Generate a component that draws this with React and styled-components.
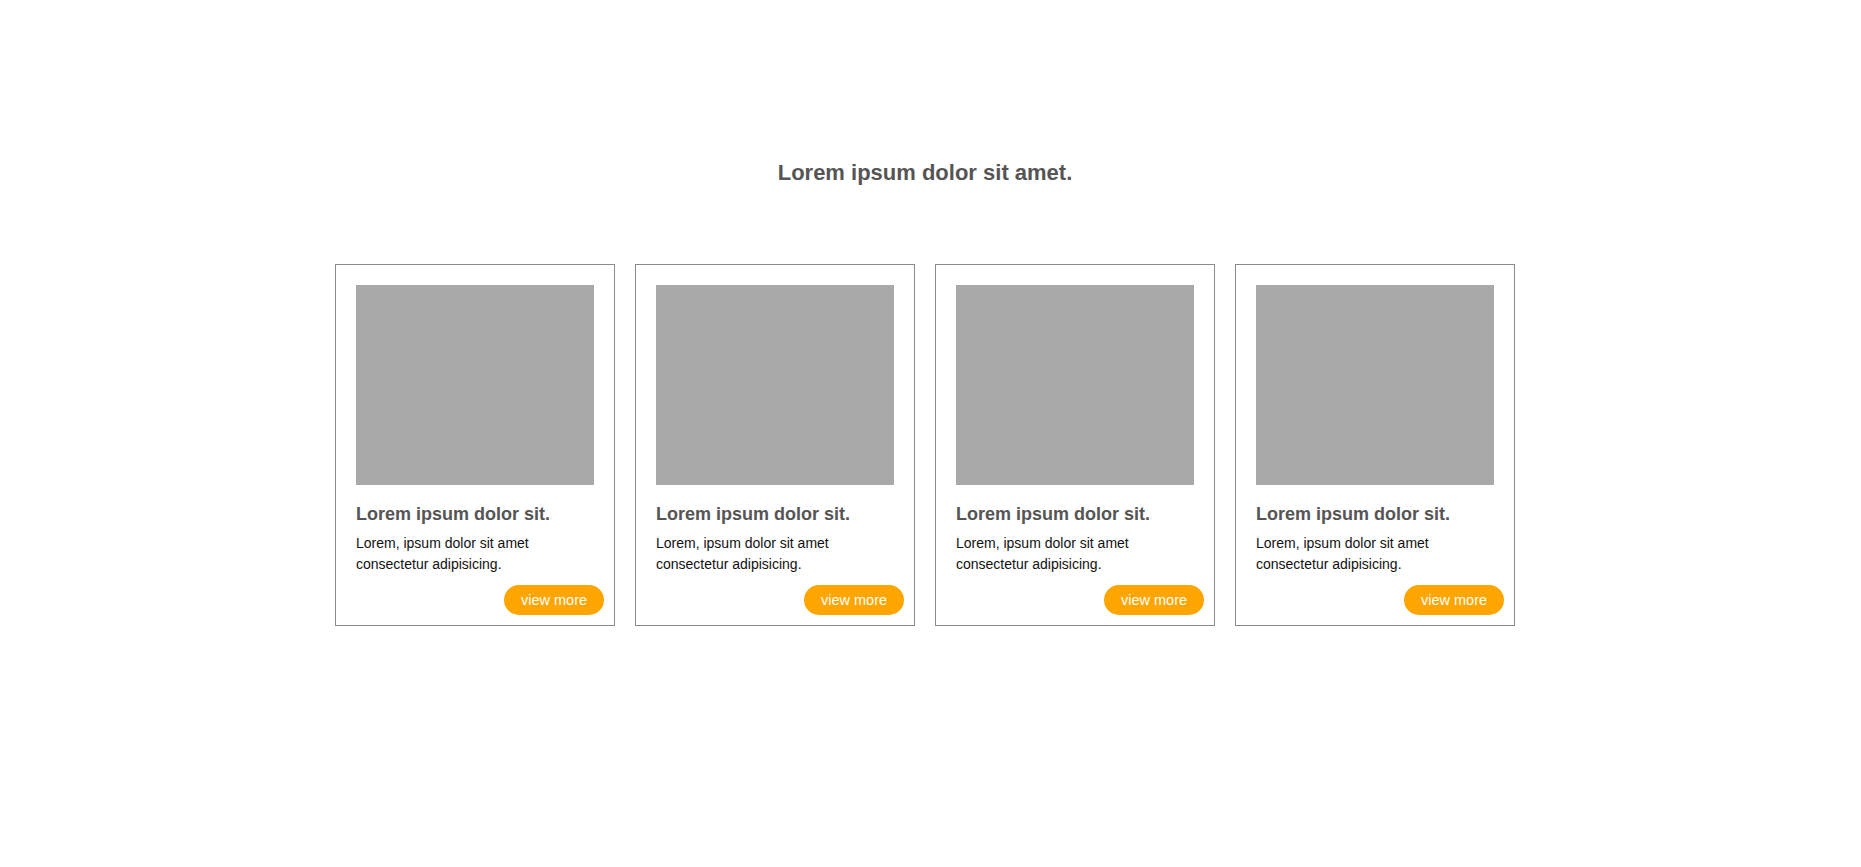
import React from "react";
import styled, { createGlobalStyle } from "styled-components";

const GlobalStyle = createGlobalStyle`
  html, body {
    margin: 0;
    padding: 0;
    background: #ffffff;
    font-family: "Liberation Sans", Arial, sans-serif;
  }
  * { box-sizing: border-box; }
`;

const Page = styled.main`
  display: flex;
  flex-direction: column;
  align-items: center;
  padding: 160px 11px 0 0;
  min-height: 867px;
`;

const Heading = styled.h1`
  margin: 0;
  font-size: 22px;
  font-weight: 700;
  line-height: 25px;
  color: #555555;
`;

const CardRow = styled.section`
  display: flex;
  gap: 20px;
  margin-top: 79px;
`;

const Card = styled.article`
  width: 280px;
  display: flex;
  flex-direction: column;
  border: 1px solid #8a8a8a;
  padding: 20px 20px 10px;
`;

const Thumb = styled.div`
  width: 238px;
  height: 200px;
  background: #a9a9a9;
`;

const CardTitle = styled.h3`
  margin: 18.7px 0 8px;
  font-size: 18px;
  font-weight: 700;
  line-height: 21.5px;
  color: #555555;
`;

const CardText = styled.p`
  margin: 0 0 10px;
  font-size: 14px;
  line-height: 21px;
  color: #111111;
  max-width: 190px;
`;

const MoreButton = styled.button`
  align-self: flex-end;
  margin-right: -10px;
  width: 100px;
  height: 30px;
  border: none;
  border-radius: 15px;
  background: #ffa500;
  color: #ffffff;
  font-family: "Liberation Sans", Arial, sans-serif;
  font-size: 14.5px;
  cursor: pointer;
  padding: 0;
`;

const cards = [1, 2, 3, 4];

export default function App() {
  return (
    <>
      <GlobalStyle />
      <Page>
        <Heading>Lorem ipsum dolor sit amet.</Heading>
        <CardRow>
          {cards.map((c) => (
            <Card key={c}>
              <Thumb />
              <CardTitle>Lorem ipsum dolor sit.</CardTitle>
              <CardText>Lorem, ipsum dolor sit amet consectetur adipisicing.</CardText>
              <MoreButton>view more</MoreButton>
            </Card>
          ))}
        </CardRow>
      </Page>
    </>
  );
}
